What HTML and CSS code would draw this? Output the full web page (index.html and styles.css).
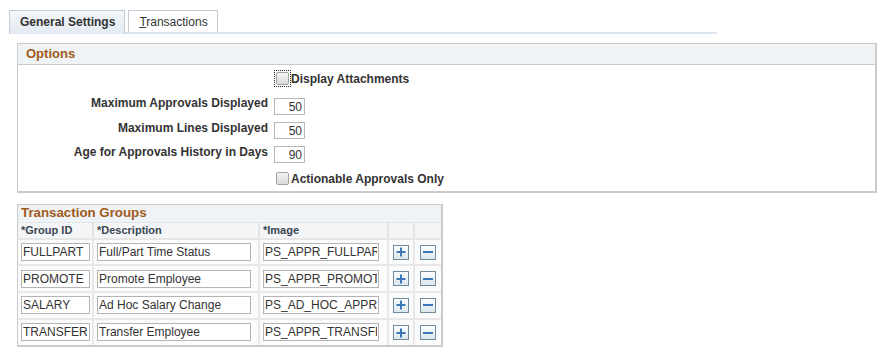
FILE: index.html
```html
<!DOCTYPE html>
<html>
<head>
<meta charset="utf-8">
<link rel="stylesheet" href="styles.css">
</head>
<body>
<div class="page">
  <div class="tabs">
    <div class="tab active">General Settings</div>
    <div class="tab"><span class="ul">T</span>ransactions</div>
  </div>

  <div class="box options">
    <div class="box-title">Options</div>
    <div class="form">
      <div class="lbl"></div>
      <label class="cb-row first"><span class="focus"><input type="checkbox" class="cb"></span>Display Attachments</label>

      <div class="lbl gap">Maximum Approvals Displayed</div>
      <input class="num gap" value="50">

      <div class="lbl">Maximum Lines Displayed</div>
      <input class="num" value="50">

      <div class="lbl">Age for Approvals History in Days</div>
      <input class="num" value="90">

      <div class="lbl"></div>
      <label class="cb-row"><span class="nofocus"><input type="checkbox" class="cb"></span>Actionable Approvals Only</label>
    </div>
  </div>

  <div class="box groups">
    <div class="box-title small">Transaction Groups</div>
    <table class="grid">
      <colgroup>
        <col class="c1"><col class="c2"><col class="c3"><col class="c4"><col class="c5">
      </colgroup>
      <thead>
        <tr><th>*Group ID</th><th>*Description</th><th>*Image</th><th></th><th></th></tr>
      </thead>
      <tbody>
        <tr>
          <td><input class="t id" value="FULLPART"></td>
          <td><input class="t desc" value="Full/Part Time Status"></td>
          <td><input class="t img" value="PS_APPR_FULLPART"></td>
          <td class="bc"><span class="btn"><svg width="10" height="10" viewBox="0 0 10 10"><path d="M5 0.5V9.5M0.5 5H9.5" stroke="#3b78b9" stroke-width="2"/></svg></span></td>
          <td class="bc"><span class="btn"><svg width="10" height="10" viewBox="0 0 10 10"><path d="M0 5H10" stroke="#3b78b9" stroke-width="2"/></svg></span></td>
        </tr>
        <tr>
          <td><input class="t id" value="PROMOTE"></td>
          <td><input class="t desc" value="Promote Employee"></td>
          <td><input class="t img" value="PS_APPR_PROMOTE"></td>
          <td class="bc"><span class="btn"><svg width="10" height="10" viewBox="0 0 10 10"><path d="M5 0.5V9.5M0.5 5H9.5" stroke="#3b78b9" stroke-width="2"/></svg></span></td>
          <td class="bc"><span class="btn"><svg width="10" height="10" viewBox="0 0 10 10"><path d="M0 5H10" stroke="#3b78b9" stroke-width="2"/></svg></span></td>
        </tr>
        <tr>
          <td><input class="t id" value="SALARY"></td>
          <td><input class="t desc" value="Ad Hoc Salary Change"></td>
          <td><input class="t img" value="PS_AD_HOC_APPROVAL"></td>
          <td class="bc"><span class="btn"><svg width="10" height="10" viewBox="0 0 10 10"><path d="M5 0.5V9.5M0.5 5H9.5" stroke="#3b78b9" stroke-width="2"/></svg></span></td>
          <td class="bc"><span class="btn"><svg width="10" height="10" viewBox="0 0 10 10"><path d="M0 5H10" stroke="#3b78b9" stroke-width="2"/></svg></span></td>
        </tr>
        <tr>
          <td><input class="t id" value="TRANSFER"></td>
          <td><input class="t desc" value="Transfer Employee"></td>
          <td><input class="t img" value="PS_APPR_TRANSFER"></td>
          <td class="bc"><span class="btn"><svg width="10" height="10" viewBox="0 0 10 10"><path d="M5 0.5V9.5M0.5 5H9.5" stroke="#3b78b9" stroke-width="2"/></svg></span></td>
          <td class="bc"><span class="btn"><svg width="10" height="10" viewBox="0 0 10 10"><path d="M0 5H10" stroke="#3b78b9" stroke-width="2"/></svg></span></td>
        </tr>
      </tbody>
    </table>
  </div>
</div>
</body>
</html>
```
FILE: styles.css
```css
* { box-sizing: border-box; }
html, body { margin: 0; padding: 0; background: #fff; }
body {
  font-family: "Liberation Sans", Arial, sans-serif;
  font-size: 12px;
  color: #333;
}
.page { padding: 10px 0 0 9px; }

.tabs {
  display: flex;
  gap: 3px;
  width: 708px;
  height: 24px;
  border-bottom: 2px solid #dae4ef;
}
.tab {
  height: 22px;
  line-height: 22px;
  padding: 0 9px 0 10px;
  border: 1px solid #c3ccd6;
  border-bottom: none;
  background: #fff;
  color: #333;
}
.tab.active {
  font-weight: bold;
  padding: 0 9px 0 10px;
  background: linear-gradient(#f4f7fa, #e3eaf2);
  height: 24px;
}
.ul { text-decoration: underline; }

.box {
  border: 1px solid #cbcbcb;
  border-right-width: 2px;
  border-bottom-width: 2px;
  margin-left: 8px;
}
.options { margin-top: 9px; width: 860px; padding-bottom: 4px; }
.box-title {
  height: 21px;
  line-height: 20px;
  padding-left: 8px;
  background: #eff3f5;
  border-bottom: 1px solid #c5cbd0;
  color: #a15a1a;
  font-weight: bold;
  font-size: 13px;
}
.box-title.small {
  height: 17px;
  line-height: 16px;
  padding-left: 3px;
  border-bottom: none;
  font-size: 13.3px;
}

.form {
  display: grid;
  grid-template-columns: 250px auto;
  column-gap: 6px;
  row-gap: 7px;
  padding-top: 5px;
  justify-items: start;
  align-items: start;
}
.lbl {
  justify-self: end;
  font-weight: bold;
  line-height: 14px;
  margin-top: -1px;
  color: #333;
  white-space: nowrap;
}
.num.gap { margin-top: 4px; }
.lbl.gap { margin-top: 2px; }
.num {
  width: 31px;
  height: 17px;
  border: 1px solid #b8b8b8;
  padding: 0 2px;
  text-align: right;
  font-family: "Liberation Sans", Arial, sans-serif;
  font-size: 12px;
  color: #333;
  background: #fff;
}
.cb-row {
  display: flex;
  align-items: center;
  height: 17px;
  font-weight: bold;
  white-space: nowrap;
}
.focus {
  display: flex;
  padding: 1px;
  border: 1px dotted #222;
  margin-right: 0;
}
.nofocus {
  display: flex;
  padding: 1px;
  border: 1px solid transparent;
  margin-right: 0;
}
.cb {
  appearance: none;
  -webkit-appearance: none;
  margin: 0;
  width: 13px;
  height: 13px;
  border: 1px solid #a2a2a2;
  border-radius: 2px;
  background: linear-gradient(#f4f4f4, #d9d9d9);
}

.groups { margin-top: 11px; width: 426px; }
.grid {
  width: 100%;
  border-collapse: collapse;
  table-layout: fixed;
}
.c1 { width: 75px; }
.c2 { width: 166px; }
.c3 { width: 129px; }
.c4 { width: 26px; }
.c5 { width: 27px; }
.grid th {
  height: 16px;
  text-align: left;
  font-size: 11px;
  font-weight: bold;
  color: #3a4654;
  padding: 0 0 0 3px;
  background: #f3f5f6;
  border-top: 1px solid #e4e7ea;
  border-right: 2px solid #e4e4e4;
  border-bottom: 2px solid #e6e6e6;
}
.grid td {
  height: 26.7px;
  padding: 0 0 0 3px;
  background: #fbfbfb;
  border-right: 2px solid #e8e8e8;
  border-bottom: 2px solid #e8e8e8;
  vertical-align: middle;
}
.grid tr:last-child td { border-bottom: none; }
.grid th:last-child, .grid td:last-child { border-right: none; }
.t {
  display: block;
  height: 18px;
  border: 1px solid #b5b5b5;
  padding: 0 1px;
  font-family: "Liberation Sans", Arial, sans-serif;
  font-size: 12px;
  color: #333;
  background: #fff;
}
.id { width: 69px; }
.desc { width: 154px; }
.img { width: 116px; }
.grid td.bc { padding: 0; text-align: center; }
.btn {
  display: inline-flex;
  align-items: center;
  justify-content: center;
  width: 16px;
  height: 15px;
  border: 1px solid #6e8c9b;
  background: linear-gradient(#fdfeff, #dbe6ec);
  vertical-align: middle;
}
```
